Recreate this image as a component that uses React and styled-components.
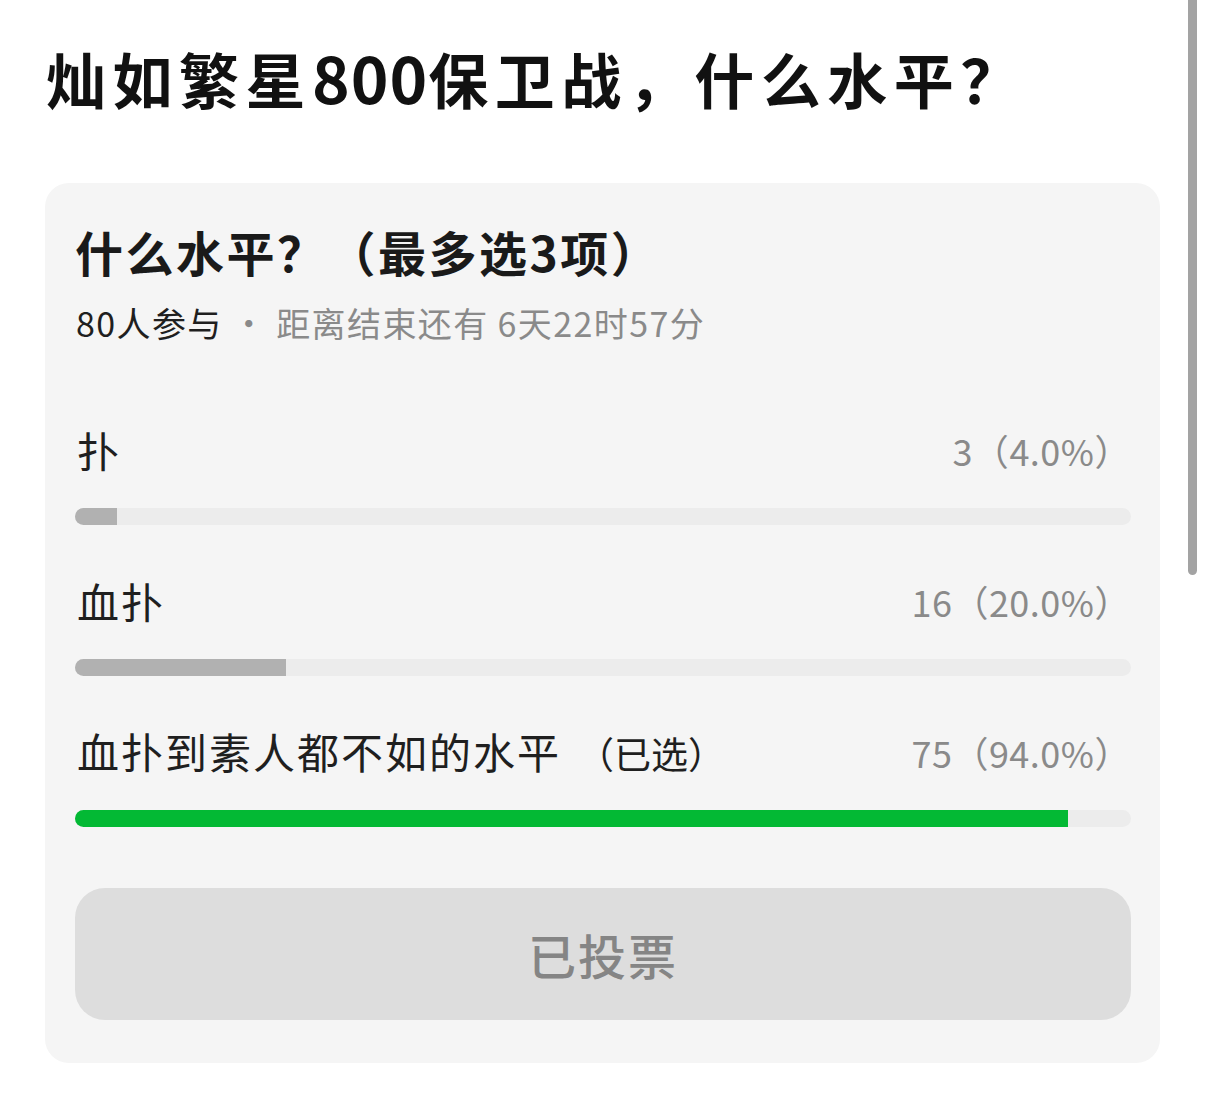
import styled, { createGlobalStyle } from "styled-components";

const GlobalStyle = createGlobalStyle`
	html, body {
		margin: 0;
		padding: 0;
		background: #ffffff;
	}
	body {
		font-family: "Noto Sans CJK SC", "Noto Sans", sans-serif;
		color: #1a1a1a;
	}
`;

const options = [
	{ label: "扑", count: 3, pct: 4.0 },
	{ label: "血扑", count: 16, pct: 20.0 },
	{ label: "血扑到素人都不如的水平", count: 75, pct: 94.0, chosen: true },
];

const App = () => {
	return (
		<Page>
			<GlobalStyle />
			<Title>
				灿如繁星<Digits>800</Digits>保卫战，什么水平？
			</Title>
			<PollCard>
				<PollHeading>什么水平？（最多选3项）</PollHeading>
				<PollMeta>
					<strong>80人参与</strong> · 距离结束还有 6天22时57分
				</PollMeta>
				<OptionList>
					{options.map((opt) => (
						<Option key={opt.label}>
							<OptionRow>
								<OptionLabel>
									{opt.label}
									{opt.chosen && <Chosen>（已选）</Chosen>}
								</OptionLabel>
								<OptionCount>
									{opt.count}（{opt.pct.toFixed(1)}%）
								</OptionCount>
							</OptionRow>
							<Track>
								<Fill $chosen={opt.chosen} style={{ width: `${opt.pct}%` }} />
							</Track>
						</Option>
					))}
				</OptionList>
				<VotedButton disabled>已投票</VotedButton>
			</PollCard>
			<ScrollThumb />
		</Page>
	);
};

const Page = styled.div`
	position: relative;
	width: 1206px;
	height: 1103px;
	overflow: hidden;
	padding: 38px 46px 0 45px;
	box-sizing: border-box;
`;

const Title = styled.h1`
	height: 80px;
	margin: 0 0 65px 1px;
	font-size: 60px;
	line-height: 80px;
	font-weight: 700;
	color: #111111;
	letter-spacing: 6.5px;
`;

// digits look wider in the reference, less tracking
const Digits = styled.span`
	font-size: 64px;
	line-height: 0;
	letter-spacing: 1px;
`;

const PollCard = styled.div`
	background: #f5f5f5;
	border-radius: 24px;
	padding: 38px 29px 43px 30px;
	height: 880px;
	box-sizing: border-box;
`;

const PollHeading = styled.h2`
	margin: 0;
	font-size: 48px;
	line-height: 60px;
	font-weight: 700;
	color: #1a1a1a;
	letter-spacing: 2.5px;
`;

const PollMeta = styled.div`
	margin: 20px 0 0 1px;
	font-size: 34px;
	line-height: 44px;
	color: #8a8a8a;
	letter-spacing: 1.4px;

	> strong {
		font-weight: 400;
		color: #1f1f1f;
	}
`;

const OptionList = styled.div`
	display: flex;
	flex-direction: column;
	gap: 48px;
	margin-top: 77px;
`;

const Option = styled.div`
	display: flex;
	flex-direction: column;
	gap: 30px;
`;

const OptionRow = styled.div`
	display: flex;
	align-items: center;
	justify-content: space-between;
	height: 56px;
	padding: 0 0 0 2px;
`;

const OptionLabel = styled.span`
	font-size: 42px;
	line-height: 56px;
	color: #1f1f1f;
	letter-spacing: 2px;
`;

const Chosen = styled.span`
	margin-left: 16px;
	font-size: 37px;
	letter-spacing: 0;
`;

const OptionCount = styled.span`
	font-size: 36px;
	line-height: 56px;
	color: #8a8a8a;
	letter-spacing: 0.5px;
`;

const Track = styled.div`
	height: 17px;
	border-radius: 9px;
	background: #ececec;
	overflow: hidden;
`;

const Fill = styled.div`
	height: 100%;
	background: ${(p) => (p.$chosen ? "#03b934" : "#b1b1b1")};
`;

const VotedButton = styled.button`
	display: block;
	width: 100%;
	height: 132px;
	margin-top: 61px;
	border: none;
	border-radius: 30px;
	background: #dddddd;
	color: #858585;
	font-family: "Noto Sans CJK SC", sans-serif;
	font-size: 48px;
	font-weight: 500;
	letter-spacing: 2px;
	cursor: default;
`;

const ScrollThumb = styled.div`
	position: absolute;
	top: -6px;
	left: 1188px;
	width: 9px;
	height: 581px;
	border-radius: 5px;
	background: #a3a3a3;
`;

export default App;
